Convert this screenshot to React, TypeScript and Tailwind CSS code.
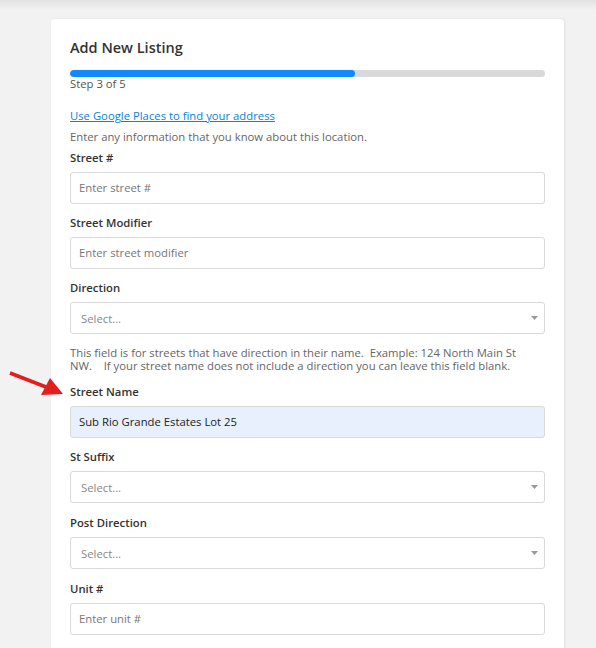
import React from 'react';

type Field =
  | { kind: 'input'; label: string; placeholder?: string; value?: string; filled?: boolean }
  | { kind: 'select'; label: string };

function Label({ children }: { children: React.ReactNode }) {
  return <div className="pt-[1px] text-[11.3px] leading-[18px] font-semibold text-[#333] mb-[5px]">{children}</div>;
}

function TextInput({ placeholder, value, filled }: { placeholder?: string; value?: string; filled?: boolean }) {
  return (
    <div
      className={`h-[32px] w-full rounded-[3px] border border-[#d9d9d9] px-[8px] flex items-center text-[11.3px] ${
        filled ? 'bg-[#e8f0fe] text-[#222]' : 'bg-white text-[#777]'
      }`}
    >
      {value ?? placeholder}
    </div>
  );
}

function SelectBox() {
  return (
    <div className="h-[32px] w-full rounded-[3px] border border-[#d9d9d9] bg-white pl-[10px] pr-[6px] pt-[3px] flex items-center justify-between text-[11.3px] text-[#888]">
      <span>Select...</span>
      <svg width="7" height="4" viewBox="0 0 7 4" className="-mt-[3px]">
        <path d="M0 0h7L3.5 4z" fill="#999" />
      </svg>
    </div>
  );
}

function FieldBlock({ f, mt = 'mt-[9px]' }: { f: Field; mt?: string }) {
  return (
    <div className={mt}>
      <Label>{f.label}</Label>
      {f.kind === 'input' ? <TextInput placeholder={f.placeholder} value={f.value} filled={f.filled} /> : <SelectBox />}
    </div>
  );
}

export default function App() {
  return (
    <div
      className="relative min-h-[648px] bg-[#f2f2f2] overflow-hidden"
      style={{ fontFamily: '"Open Sans", "Noto Sans", sans-serif' }}
    >
      <div className="absolute top-0 left-0 right-0 h-[10px] bg-gradient-to-b from-[#e2e2e2] to-[#f2f2f2]" />

      <div className="relative ml-[51px] mt-[19px] w-[513px] rounded-[4px] bg-white shadow-[1px_0_3px_rgba(0,0,0,0.08)] px-[19px] pt-[19px] pb-[30px]">
        <h1 className="text-[14.5px] leading-[20px] font-semibold text-[#333]">Add New Listing</h1>

        <div className="mt-[12px] h-[7px] w-full rounded-full bg-[#d9d9d9] overflow-hidden">
          <div className="h-full w-[60%] rounded-full bg-[#1089ff]" />
        </div>
        <div className="text-[11.3px] leading-[13px] text-[#555]">Step 3 of 5</div>

        <a className="mt-[19px] block text-[11.3px] leading-[14px] text-[#0b7fdb] underline">
          Use Google Places to find your address
        </a>
        <div className="mt-[7px] text-[11.3px] leading-[14px] text-[#666]">
          Enter any information that you know about this location.
        </div>

        <FieldBlock f={{ kind: 'input', label: 'Street #', placeholder: 'Enter street #' }} mt="mt-[4px]" />
        <FieldBlock f={{ kind: 'input', label: 'Street Modifier', placeholder: 'Enter street modifier' }} />
        <FieldBlock f={{ kind: 'select', label: 'Direction' }} />

        <div className="mt-[12px] text-[11.3px] leading-[13px] text-[#666] whitespace-pre">
          {'This field is for streets that have direction in their name.  Example: 124 North Main St\nNW.    If your street name does not include a direction you can leave this field blank.'}
        </div>

        <FieldBlock f={{ kind: 'input', label: 'Street Name', value: 'Sub Rio Grande Estates Lot 25', filled: true }} mt="mt-[10px]" />
        <FieldBlock f={{ kind: 'select', label: 'St Suffix' }} mt="mt-[9px]" />
        <FieldBlock f={{ kind: 'select', label: 'Post Direction' }} mt="mt-[10px]" />
        <FieldBlock f={{ kind: 'input', label: 'Unit #', placeholder: 'Enter unit #' }} mt="mt-[10px]" />
      </div>

      {/* annotation arrow */}
      <svg className="absolute left-0 top-[365px]" width="70" height="40" viewBox="0 0 70 40">
        <line x1="10" y1="8" x2="46" y2="22" stroke="#e31e1e" strokeWidth="3.5" />
        <polygon points="50,13 41,30 63,29" fill="#e31e1e" />
      </svg>
    </div>
  );
}
